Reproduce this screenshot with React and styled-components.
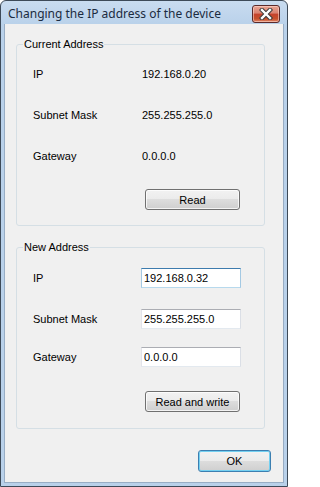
import React from "react";
import styled, { createGlobalStyle } from "styled-components";

const Global = createGlobalStyle`
  html, body { margin: 0; padding: 0; background: #ffffff; }
  * { box-sizing: border-box; }
`;

const Window = styled.div`
  width: 288px;
  height: 487px;
  display: flex;
  flex-direction: column;
  border: 1px solid #3d4a58;
  border-radius: 6px 6px 0 0;
  background: linear-gradient(#c9dcf0, #b9d1ea 24px, #b9d1ea);
  padding: 0 3px 3px 3px;
  font-family: "Liberation Sans", Arial, sans-serif;
  font-size: 11px;
  color: #000;
`;

const TitleBar = styled.div`
  height: 23px;
  flex: none;
  display: flex;
  align-items: center;
  justify-content: space-between;
  padding: 0 4px 0 4px;
`;

const Title = styled.div`
  font-family: "Noto Sans", "Open Sans", sans-serif;
  font-size: 12px;
  color: #1b2b40;
  white-space: nowrap;
  margin-top: 1px;
`;

const CloseButton = styled.div`
  width: 28px;
  height: 18px;
  margin-top: 2px;
  border: 1px solid #5a2a2a;
  border-radius: 3px;
  background: linear-gradient(#e8a493 0%, #d98170 45%, #c4412c 50%, #c6502c 80%, #e0886a 100%);
  box-shadow: inset 0 0 0 1px rgba(255, 220, 210, 0.55);
  display: flex;
  align-items: center;
  justify-content: center;
`;

const Content = styled.div`
  flex: 1;
  background: #f0f0f0;
  border: 1px solid #98adc4;
  border-top: none;
  display: flex;
  flex-direction: column;
  padding: 20px 12px 10px 11px;
`;

const Group = styled.div`
  position: relative;
  border: 1px solid #d5dfe5;
  border-radius: 3px;
  margin: ${(p) => p.$mt || 0}px 6px 0 0;
  padding: ${(p) => p.$pad};
  display: flex;
  flex-direction: column;
`;

const Legend = styled.span`
  position: absolute;
  top: -8px;
  left: 6px;
  padding: 0 1px 0 1px;
  background: #f0f0f0;
  line-height: 14px;
`;

const Row = styled.div`
  height: 20px;
  display: flex;
  align-items: center;
  margin-top: ${(p) => p.$mt || 0}px;
`;

const Label = styled.span`
  width: 108px;
  flex: none;
`;

const Value = styled.span`
  padding-left: 1px;
`;

const TextBox = styled.input`
  width: 100px;
  height: 20px;
  padding: 0 2px;
  font-family: "Liberation Sans", Arial, sans-serif;
  font-size: 11px;
  color: #000;
  background: #fff;
  border: 1px solid;
  border-color: ${(p) =>
    p.$focus ? "#3d7bad #a4c9e3 #b7d9ed #a4c9e3" : "#abadb3 #dbdfe6 #e3e9ef #e2e3ea"};
  outline: none;
  border-radius: 0;
`;

const ButtonRow = styled.div`
  display: flex;
  justify-content: flex-end;
  margin-top: ${(p) => p.$mt || 0}px;
  padding-right: ${(p) => p.$pr || 0}px;
`;

const Button = styled.button`
  width: ${(p) => p.$w}px;
  height: ${(p) => p.$h}px;
  padding: 0;
  font-family: "Liberation Sans", Arial, sans-serif;
  font-size: 11px;
  color: #000;
  border: 1px solid ${(p) => (p.$default ? "#3c7fb1" : "#707070")};
  border-radius: 3px;
  background: linear-gradient(#f2f2f2 0%, #ebebeb 50%, #dddddd 50%, #cfcfcf 100%);
  box-shadow: inset 0 0 0 1px ${(p) => (p.$default ? "#74d0f1" : "rgba(255,255,255,0.75)")};
`;

export default function App() {
  return (
    <>
      <Global />
      <Window>
        <TitleBar>
          <Title>Changing the IP address of the device</Title>
          <CloseButton>
            <svg width="14" height="12" viewBox="0 0 14 12">
              <path d="M3 2 L11 10 M11 2 L3 10" stroke="#3a3a3a" strokeWidth="4.4" strokeLinecap="square" />
              <path d="M3 2 L11 10 M11 2 L3 10" stroke="#ffffff" strokeWidth="2.4" strokeLinecap="square" />
            </svg>
          </CloseButton>
        </TitleBar>
        <Content>
          <Group $pad="19px 0 15px 16px">
            <Legend>Current Address</Legend>
            <Row>
              <Label>IP</Label>
              <Value>192.168.0.20</Value>
            </Row>
            <Row $mt={21}>
              <Label>Subnet Mask</Label>
              <Value>255.255.255.0</Value>
            </Row>
            <Row $mt={21}>
              <Label>Gateway</Label>
              <Value>0.0.0.0</Value>
            </Row>
            <ButtonRow $mt={23} $pr={24}>
              <Button $w={95} $h={21}>Read</Button>
            </ButtonRow>
          </Group>
          <Group $mt={21} $pad="20px 0 16px 16px">
            <Legend>New Address</Legend>
            <Row>
              <Label>IP</Label>
              <TextBox $focus defaultValue="192.168.0.32" />
            </Row>
            <Row $mt={21}>
              <Label>Subnet Mask</Label>
              <TextBox defaultValue="255.255.255.0" />
            </Row>
            <Row $mt={18}>
              <Label>Gateway</Label>
              <TextBox defaultValue="0.0.0.0" />
            </Row>
            <ButtonRow $mt={24} $pr={24}>
              <Button $w={95} $h={21}>Read and write</Button>
            </ButtonRow>
          </Group>
          <ButtonRow $mt={21}>
            <Button $w={73} $h={22} $default>OK</Button>
          </ButtonRow>
        </Content>
      </Window>
    </>
  );
}
